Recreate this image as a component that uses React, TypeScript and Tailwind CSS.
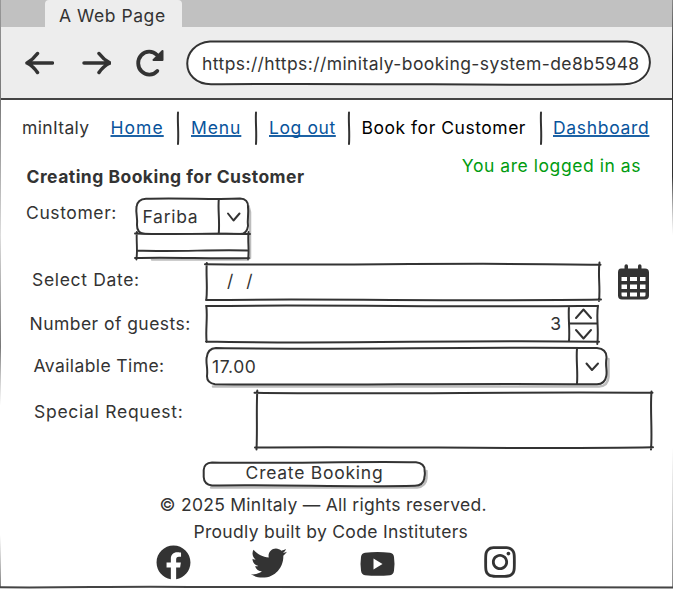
import type { ReactNode } from "react";
import { FaFacebook, FaTwitter, FaInstagram } from "react-icons/fa";

const INK = "#333333";

/** Hand-drawn outline laid over the box that holds it. */
function Sketch({ w, h, children }: { w: number; h: number; children: ReactNode }) {
  return (
    <svg
      className="pointer-events-none absolute left-0 top-0 overflow-visible"
      width={w}
      height={h}
      viewBox={`0 0 ${w} ${h}`}
      fill="none"
      stroke={INK}
      strokeWidth="2"
      strokeLinecap="round"
      strokeLinejoin="round"
    >
      {children}
    </svg>
  );
}

function Separator() {
  return (
    <svg width="4" height="36" viewBox="0 0 4 36" fill="none" stroke={INK} strokeWidth="2" strokeLinecap="round">
      <path d="M2 2.500C1.4 12 2.8 22 2 34" />
    </svg>
  );
}

function NavLink({ className, children }: { className: string; children: ReactNode }) {
  return (
    <a
      href="#"
      className={`text-[#08549c] underline decoration-[#1d62a5] decoration-2 underline-offset-1 [text-decoration-skip-ink:none] ${className}`}
    >
      {children}
    </a>
  );
}

function BrowserChrome() {
  return (
    <header>
      <div className="flex h-[27px] bg-[#c1c1c1] pl-[45px]">
        <div className="h-[27px] w-[137px] rounded-t-sm bg-[#ededed] pl-[14px] pt-[4px] tracking-[0.55px]">A Web Page</div>
      </div>
      <div className="flex h-[73px] items-center border-b-2 border-[#444] bg-[#ededed] pl-[24px] pt-px">
        <svg width="30" height="24" viewBox="0 0 30 24" fill="none" stroke={INK} strokeWidth="3.5" strokeLinecap="round" strokeLinejoin="round">
          <path d="M28.500 12H3M13.500 2.500Q9 8.500 3 12Q9 15 13.500 21.500" />
        </svg>
        <svg className="ml-[27px]" width="30" height="24" viewBox="0 0 30 24" fill="none" stroke={INK} strokeWidth="3.5" strokeLinecap="round" strokeLinejoin="round">
          <path d="M3 12H29M18 2.500Q22.500 8.500 29 12Q22.500 15 18 21.500" />
        </svg>
        <svg className="ml-[24px]" width="30" height="28" viewBox="0 0 30 28" fill="none" stroke={INK} strokeWidth="3.8" strokeLinecap="round" strokeLinejoin="round">
          <path d="M22.300 21.900A11 11.500 0 1 1 22 6" />
          <path d="M27.500 2V11H18.500Z" fill={INK} strokeWidth="2" />
        </svg>
        <div className="relative ml-[22px] flex h-[44px] w-[464px] items-center rounded-full bg-white pl-[15px] pt-[2px] tracking-[0.42px] text-[#333]">
          <Sketch w={464} h={44}>
            <path d="M23 .6C130 1.8 250 -.6 440 .4C471 1 471 43 437 43.3C320 44.8 180 42 24 43.3C-7.5 43-7.5 3 23 .6Z" />
          </Sketch>
          <span className="whitespace-nowrap">https://https://minitaly-booking-system-de8b5948</span>
        </div>
      </div>
    </header>
  );
}

function Nav() {
  return (
    <nav className="flex h-[54px] items-center whitespace-nowrap pl-[22px] pt-px">
      <span className="w-[88.500px] tracking-[0.35px]">minItaly</span>
      <NavLink className="w-[53px] tracking-[1.05px]">Home</NavLink>
      <span className="ml-[12.500px] w-[15px]"><Separator /></span>
      <NavLink className="w-[51px] tracking-[0.9px]">Menu</NavLink>
      <span className="ml-[12px] w-[15px]"><Separator /></span>
      <NavLink className="w-[67px] tracking-[0.6px]">Log out</NavLink>
      <span className="ml-[11px] w-[14.500px]"><Separator /></span>
      <span className="w-[164px] tracking-[0.53px] text-black">Book for Customer</span>
      <span className="ml-[13.500px] w-[14px]"><Separator /></span>
      <NavLink className="tracking-[0.68px]">Dashboard</NavLink>
    </nav>
  );
}

function CustomerSelect() {
  return (
    <div className="relative h-[61px] w-[113px]">
      <Sketch w={113} h={61}>
        <path d="M112.500 8L114 14V60L111 61.500H16" stroke="#bdbdbd" strokeWidth="2.500" />
        <path d="M10 .8C40 -.2 80 1.6 104 .6Q112.500 1 112 9C113 16 111 22 112 28Q111 36 104 36C70 34.8 40 37 9 36Q.8 35.500 1 27C1.800 20 -.4 15 .5 9Q1.500 1 10 .8Z" fill="white" />
        <path d="M0 36.500H112V60.500H0Z" fill="white" stroke="none" />
        <path d="M82.800 1C81.800 12 83.800 22 82.800 35" />
        <path d="M92 15.500L97.500 22.500L103.500 15.500" />
        <path d="M-1 35.500C40 37 80 35 114 36M.8 34C.2 44 1.800 52 .4 61.500M112.500 34C111.500 44 113.500 52 112 61.500M-1 60C40 59 75 61 113 60M1 52.500C40 54 75 51.500 111 52.500" strokeWidth="1.900" />
      </Sketch>
      <span className="relative ml-[6.500px] mt-[6.500px] block w-[60px] tracking-[0.7px]">Fariba</span>
    </div>
  );
}

function DateInput() {
  return (
    <div className="relative h-[38px] w-[394px] pl-[21px] pt-[6px]">
      <Sketch w={394} h={38}>
        <path d="M-1 1.200C130 2.700 260 -.8 394.500 1.700M.8 0C-.2 12 1.800 24 .3 37M0 37C130 35.500 260 38.500 395 36.500M393.500 -.5C391.800 12 394.500 24 393 38" />
      </Sketch>
      <span className="flex gap-[13px]"><span>/</span><span>/</span></span>
    </div>
  );
}

function GuestStepper() {
  return (
    <div className="relative flex h-[38px] w-[393px] justify-end pr-[38px] pt-[7px]">
      <Sketch w={393} h={38}>
        <path d="M0 1C130 -.6 260 2.700 392 .8M.3 1C1.800 12 -.6 24 .6 37M0 36.500C130 39.500 260 34.500 393 36.800M392 .8C390 12 393 24 391.300 39M363 1.500C362 12 364 24 363 36M363.500 18.500H390.500" />
        <path d="M370 13L377.500 4.500L385 13M370 25L377.500 33.500L385 25" />
      </Sketch>
      <span>3</span>
    </div>
  );
}

function TimeSelect() {
  return (
    <div className="relative h-[38px] w-[402px] pl-[6px] pt-[7px]">
      <Sketch w={402} h={38}>
        <path d="M7 38.500H393Q402 38 402.500 29V11" stroke="#bdbdbd" strokeWidth="2.500" />
        <path d="M10 .1C130 2.100 260 -1.300 391 0Q401 1 400.500 10C399 18 401.500 22 400.300 28Q399 36 391 36.300C260 35 130 37.500 9 36.300Q.8 35 1 28C2 20 -.2 16 .6 10Q1.500 .5 10 .1Z" fill="white" />
        <path d="M371 .5C370 12 372 24 371 35.500M380.500 15.500L386 22L392 15.500" />
      </Sketch>
      <span className="relative tracking-[0.6px]">17.00</span>
    </div>
  );
}

function RequestBox() {
  return (
    <div className="relative h-[57px] w-[396px]">
      <Sketch w={396} h={57}>
        <path d="M-1.500 .7C130 2.800 260 -.7 396.500 .8M1.300 -1.500C.2 18 1.500 36 .5 57.500M-1 55.500C130 54 260 57.500 397 55.300M395.500 -.5C394 18 396.500 38 395 57.500" />
      </Sketch>
    </div>
  );
}

function SubmitButton() {
  return (
    <button type="button" className="relative block h-[25px] w-[223px] text-center tracking-[0.75px]">
      <Sketch w={223} h={25}>
        <path d="M8 25.500H214Q223 24.500 223.500 16V9" stroke="#bdbdbd" strokeWidth="2.500" />
        <path d="M9 .5C80 1.800 150 -.9 213 .2Q222 1 221.600 9C222.500 13 221 15 221.300 16.500Q220 23.500 212 23.700C150 25.500 80 22.300 9 23.500Q1 22.500 .7 15V8Q1 1 9 .5Z" fill="white" />
      </Sketch>
      <span className="relative -top-[1.500px]">Create Booking</span>
    </button>
  );
}

function CalendarIcon() {
  return (
    <svg width="33" height="36" viewBox="0 0 33 36" fill={INK}>
      <path fillRule="evenodd" d="M4 4.500H7.500V2A1.700 1.700 0 0 1 11 2V4.500H21V2A1.700 1.700 0 0 1 24.500 2V4.500H28Q32 4.500 32 8.500V31.500Q32 35.500 28 35.500H5Q1 35.500 1 31.500V8.500Q1 4.500 4 4.500ZM4.500 13V17H10V13ZM13 13V17H20V13ZM23 13V17H28.500V13ZM4.500 20.500V25H10V20.500ZM13 20.500V25H20V20.500ZM23 20.500V25H28.500V20.500ZM4.500 28.500V31Q4.500 32.500 6 32.500H10V28.500ZM13 28.500V32.500H20V28.500ZM23 28.500V32.500H27Q28.500 32.500 28.500 31V28.500Z" />
    </svg>
  );
}

function YoutubeIcon() {
  return (
    <svg width="35" height="26" viewBox="0 0 35 26">
      <path fill={INK} d="M5 1.700Q17.500 .2 30 1.700Q33.500 2 34 6Q35 13 34 19.500Q33.500 23.800 30 24.200Q17.500 25.500 5 24.200Q1.500 23.800 1 19.500Q0 13 1 6Q1.500 2 5 1.700Z" />
      <path fill="white" d="M13.500 7.500V18.500L22.500 13Z" />
    </svg>
  );
}

function Footer() {
  return (
    <footer>
      <p className="mt-[6px] pl-[159.500px] tracking-[0.27px]">© 2025 MinItaly — All rights reserved.</p>
      <p className="mt-[3px] pl-[193.500px] tracking-[0.3px]">Proudly built by Code Instituters</p>
      <div className="flex h-[36px] items-center pl-[156px] text-[#333]">
        <FaFacebook size={35} />
        <FaTwitter className="ml-[60px] mt-[2px]" size={36} />
        <span className="ml-[73px] mt-[3px]"><YoutubeIcon /></span>
        <FaInstagram className="ml-[87px]" size={36} />
      </div>
    </footer>
  );
}

/** Window border: pencil strokes that fade in and out along the sides. */
function WindowEdges() {
  return (
    <svg className="pointer-events-none absolute inset-0" width="673" height="589" viewBox="0 0 673 589">
      <defs>
        <linearGradient id="left" x1="0" y1="0" x2="0" y2="1">
          <stop offset="0" stopColor="#999" />
          <stop offset=".17" stopColor="#777" />
          <stop offset=".4" stopColor="#ddd" />
          <stop offset=".59" stopColor="#777" />
          <stop offset=".69" stopColor="#999" stopOpacity="0" />
          <stop offset=".91" stopColor="#999" stopOpacity="0" />
          <stop offset="1" stopColor="#777" />
        </linearGradient>
        <linearGradient id="right" x1="0" y1="0" x2="0" y2="1">
          <stop offset="0" stopColor="#888" />
          <stop offset=".1" stopColor="#333" />
          <stop offset=".3" stopColor="#333" />
          <stop offset=".4" stopColor="#888" stopOpacity="0" />
          <stop offset=".76" stopColor="#999" stopOpacity="0" />
          <stop offset="1" stopColor="#888" />
        </linearGradient>
      </defs>
      <rect x="0" y="0" width="1" height="588" fill="url(#left)" />
      <rect x="672" y="0" width="1" height="588" fill="url(#right)" />
      <path d="M0 587.300C80 587.800 110 586.300 190 587C300 587.700 500 587 673 587.500" fill="none" stroke="#444" strokeWidth="2" />
    </svg>
  );
}

export default function App() {
  return (
    <div className="relative h-[589px] w-[673px] overflow-hidden bg-white font-['Inter',sans-serif] text-[17.5px] leading-6 text-[#333]">
      <BrowserChrome />
      <Nav />
      <main>
        <div className="flex h-[44px] justify-between pl-[26.500px] pr-[32px]">
          <h1 className="pt-[11px] font-bold tracking-[0.47px]">Creating Booking for Customer</h1>
          <p className="tracking-[0.55px] text-[#009c10]">You are logged in as</p>
        </div>
        <div className="flex h-[65px] pl-[26px]">
          <span className="w-[110px] pt-[3px] tracking-[0.6px]">Customer:</span>
          <CustomerSelect />
        </div>
        <div className="flex h-[42px] pl-[32px]">
          <span className="w-[174px] pt-[5px] tracking-[0.67px]">Select Date:</span>
          <DateInput />
          <span className="ml-[17px] mt-px"><CalendarIcon /></span>
        </div>
        <div className="flex h-[43px] pl-[29.500px]">
          <span className="w-[176.500px] pt-[7px] tracking-[0.45px]">Number of guests:</span>
          <GuestStepper />
        </div>
        <div className="flex h-[44px] pl-[33.500px]">
          <span className="w-[172.500px] pt-[6px] tracking-[0.4px]">Available Time:</span>
          <TimeSelect />
        </div>
        <div className="flex h-[70px] pl-[34px]">
          <span className="w-[222px] pt-[8px] tracking-[0.73px]">Special Request:</span>
          <RequestBox />
        </div>
        <div className="pl-[203px]">
          <SubmitButton />
        </div>
      </main>
      <Footer />
      <WindowEdges />
    </div>
  );
}
